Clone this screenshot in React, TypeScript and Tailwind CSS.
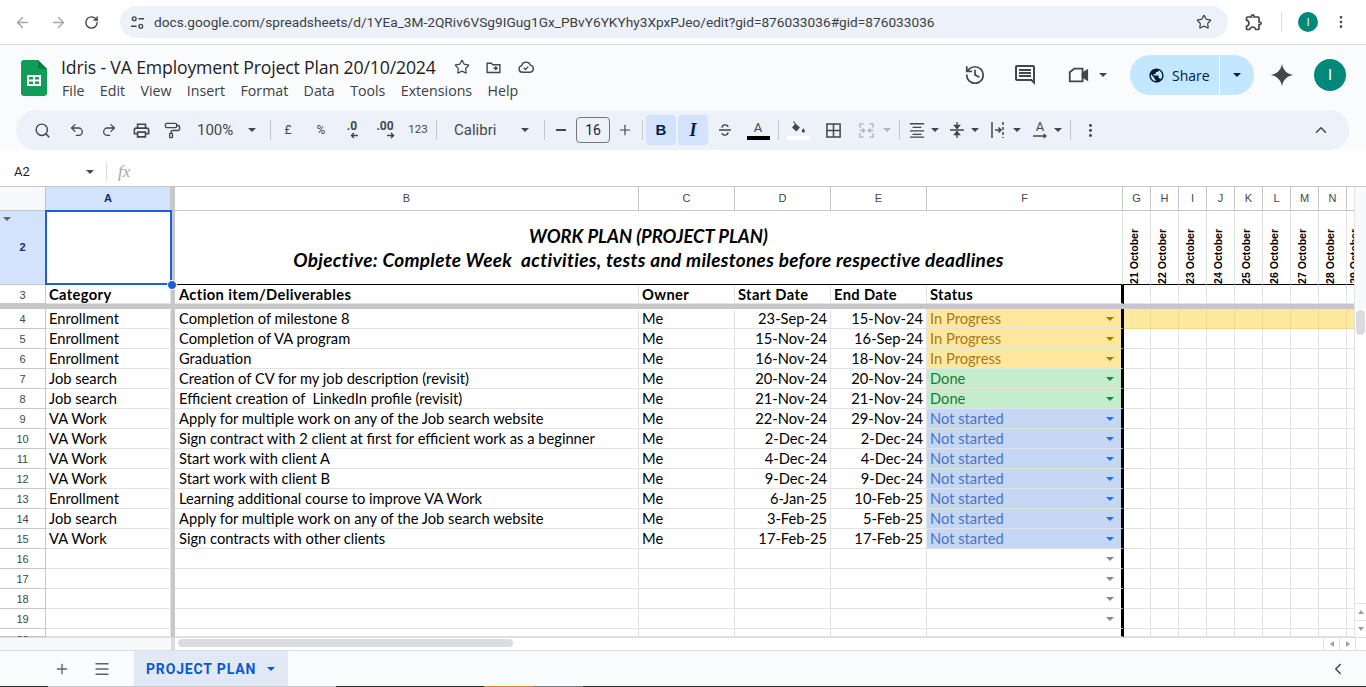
import { ReactNode } from "react";
import {
  ArrowLeft,
  ArrowRight,
  ChevronLeft,
  ChevronUp,
  History,
  Menu,
  MoreVertical,
  PaintRoller,
  Plus,
  RotateCw,
  Search,
  Star,
  Undo2,
  Redo2,
} from "lucide-react";

type Status = "progress" | "done" | "todo";

const plan: [number, string, string, string, string, Status][] = [
  [4, "Enrollment", "Completion of milestone 8", "23-Sep-24", "15-Nov-24", "progress"],
  [5, "Enrollment", "Completion of VA program", "15-Nov-24", "16-Sep-24", "progress"],
  [6, "Enrollment", "Graduation", "16-Nov-24", "18-Nov-24", "progress"],
  [7, "Job search", "Creation of CV for my job description (revisit)", "20-Nov-24", "20-Nov-24", "done"],
  [8, "Job search", "Efficient creation of  LinkedIn profile (revisit)", "21-Nov-24", "21-Nov-24", "done"],
  [9, "VA Work", "Apply for multiple work on any of the Job search website", "22-Nov-24", "29-Nov-24", "todo"],
  [10, "VA Work", "Sign contract with 2 client at first for efficient work as a beginner", "2-Dec-24", "2-Dec-24", "todo"],
  [11, "VA Work", "Start work with client A", "4-Dec-24", "4-Dec-24", "todo"],
  [12, "VA Work", "Start work with client B", "9-Dec-24", "9-Dec-24", "todo"],
  [13, "Enrollment", "Learning additional course to improve VA Work", "6-Jan-25", "10-Feb-25", "todo"],
  [14, "Job search", "Apply for multiple work on any of the Job search website", "3-Feb-25", "5-Feb-25", "todo"],
  [15, "VA Work", "Sign contracts with other clients", "17-Feb-25", "17-Feb-25", "todo"],
];

const statusStyle = {
  progress: { label: "In Progress", box: "bg-[#ffe89d] text-[#a9791c]", arrow: "border-t-[#a67c00]" },
  done: { label: "Done", box: "bg-[#c4eecb] text-[#1f7a35]", arrow: "border-t-[#22863a]" },
  todo: { label: "Not started", box: "bg-[#c6d7f6] text-[#4a74c4]", arrow: "border-t-[#1a73e8]" },
};

const dayColumns = ["G", "H", "I", "J", "K", "L", "M", "N"];
const cellText = "font-['Lato',sans-serif] text-[14.7px] leading-[19px] text-black";
const lineColor = "border-[#e2e3e3]";

function Ic({ d, size = 18, fill = "#444746" }: { d: string; size?: number; fill?: string }) {
  return (
    <svg width={size} height={size} viewBox="0 0 24 24" fill={fill}>
      <path d={d} />
    </svg>
  );
}

function Caret({ color = "border-t-[#444746]" }: { color?: string }) {
  return <span className={`block w-0 h-0 border-x-[4px] border-x-transparent border-t-[4px] ${color}`} />;
}

function Slot({ w, children }: { w: string; children?: ReactNode }) {
  return <div className={`${w} h-full shrink-0 flex items-center justify-center`}>{children}</div>;
}

function Sep() {
  return <div className="w-px h-5 bg-[#c7c7c7] shrink-0" />;
}

function TinyLabel({ children, bold }: { children: ReactNode; bold?: boolean }) {
  return (
    <span className={`font-['Roboto',sans-serif] text-[12px] text-[#444746] ${bold ? "font-bold" : ""}`}>
      {children}
    </span>
  );
}

function DecimalIcon({ label, dir }: { label: string; dir: "left" | "right" }) {
  return (
    <div className="flex flex-col items-end -mt-[2px]">
      <span className="font-['Roboto',sans-serif] font-bold text-[12px] leading-[12px] text-[#444746]">{label}</span>
      <svg width="8" height="7" viewBox="0 0 8 7" fill="none" stroke="#444746" strokeWidth="1.500" className="-mr-[1px]">
        {dir === "left" ? <path d="M8 3.500H1.500M4 1L1.500 3.500 4 6" /> : <path d="M0 3.500h6.500M4 1l2.500 2.500L4 6" />}
      </svg>
    </div>
  );
}

function SheetsLogo() {
  return (
    <svg width="26" height="36" viewBox="0 0 26 36">
      <path d="M3 0h14l9 9v24a3 3 0 0 1-3 3H3a3 3 0 0 1-3-3V3a3 3 0 0 1 3-3z" fill="#0f9d58" />
      <path d="M17 0l9 9h-7a2 2 0 0 1-2-2z" fill="#0b7a43" />
      <path d="M6 15h14v11H6zm2 2v2.500h4V17zm6 0v2.500h4V17zm-6 4.500V24h4v-2.500zm6 0V24h4v-2.500z" fill="#fff" fillRule="evenodd" />
    </svg>
  );
}

function BrowserBar() {
  return (
    <div className="h-[45px] shrink-0 bg-white border-b border-[#dadce0] flex items-center text-[#5f6368]">
      <Slot w="w-[44px]"><ArrowLeft size={17} className="text-[#a3a6aa] ml-[1px]" /></Slot>
      <Slot w="w-[28px]"><ArrowRight size={17} className="text-[#a3a6aa]" /></Slot>
      <Slot w="w-[38px]"><RotateCw size={15} strokeWidth={2.2} className="text-[#444746]" /></Slot>
      <div className="w-[10px]" />
      <div className="w-[1108px] h-[32px] rounded-full bg-[#edf2fa] flex items-center shrink-0">
        <div className="w-[34px] flex justify-center">
          <svg width="15" height="15" viewBox="0 0 16 16" fill="none" stroke="#444746" strokeWidth="1.500">
            <circle cx="4.500" cy="4" r="2" />
            <path d="M9 4h6M1 12h6" />
            <circle cx="11.500" cy="12" r="2" />
          </svg>
        </div>
        <span className="font-['Roboto',sans-serif] text-[13.7px] text-[#3c4043] whitespace-nowrap">
          docs.google.com/spreadsheets/d/1YEa_3M-2QRiv6VSg9IGug1Gx_PBvY6YKYhy3XpxPJeo/edit?gid=876033036#gid=876033036
        </span>
        <div className="flex-1" />
        <Star size={16} strokeWidth={1.8} className="text-[#444746] mr-[16px]" />
      </div>
      <Slot w="w-[52px]">
        <Ic size={20} d="M10.500 4.500c.28 0 .5.22.5.5v2h6v6h2c.28 0 .5.22.5.5s-.22.5-.5.5h-2v6h-2.120c-.68-1.750-2.390-3-4.380-3s-3.700 1.250-4.380 3H4v-2.120c1.750-.68 3-2.390 3-4.380 0-1.990-1.240-3.700-2.990-4.380L4 7h6V5c0-.28.22-.5.5-.5m0-2C9.120 2.500 8 3.620 8 5H4c-1.100 0-1.990.9-1.990 2v3.800h.29c1.490 0 2.700 1.210 2.700 2.700s-1.210 2.700-2.700 2.700H2V20c0 1.100.9 2 2 2h3.800v-.3c0-1.490 1.210-2.700 2.700-2.700s2.700 1.210 2.700 2.700v.3H17c1.100 0 2-.9 2-2v-4c1.380 0 2.500-1.120 2.500-2.500S20.380 11 19 11V7c0-1.100-.9-2-2-2h-4c0-1.380-1.120-2.500-2.500-2.500z" />
      </Slot>
      <div className="w-px h-5 bg-[#d3e3fd] ml-[1px]" />
      <div className="w-[16px]" />
      <div className="w-5 h-5 rounded-full bg-[#00897b] text-white text-[10px] font-['Roboto',sans-serif] flex items-center justify-center">I</div>
      <Slot w="w-[46px]"><MoreVertical size={16} className="text-[#444746]" /></Slot>
    </div>
  );
}

function TitleRow() {
  return (
    <div className="h-[65px] flex items-start shrink-0">
      <div className="w-[61px] pl-[21px] pt-[15px] shrink-0"><SheetsLogo /></div>
      <div className="flex flex-col w-[560px] shrink-0">
        <div className="flex items-center h-[24px] mt-[10px]">
          <span className="font-['Open_Sans',sans-serif] text-[17.7px] leading-[24px] text-[#1f1f1f] whitespace-nowrap tracking-[-0.01em]">
            Idris - VA Employment Project Plan 20/10/2024
          </span>
          <div className="w-[18px]" />
          <Star size={16} strokeWidth={1.8} className="text-[#444746]" />
          <div className="w-[15px]" />
          <svg width="17" height="17" viewBox="0 0 24 24" fill="none" stroke="#444746" strokeWidth="2">
            <path d="M3 6h6l2 2h10v11H3zM12 13h5M14.500 10.500l2.500 2.500-2.500 2.500" />
          </svg>
          <div className="w-[15px]" />
          <svg width="18" height="18" viewBox="0 0 24 24" fill="none" stroke="#444746" strokeWidth="1.800">
            <path d="M7 19a4.500 4.500 0 0 1-.7-8.900A6 6 0 0 1 17.800 9.500 4.800 4.800 0 0 1 17.500 19zM9 13l2.300 2.300L15 11.500" />
          </svg>
        </div>
        <div className="flex items-center gap-[15.4px] h-[22px] mt-[1px] pl-[1px] font-['Open_Sans',sans-serif] text-[14.2px] text-[#3c4043]">
          {["File", "Edit", "View", "Insert", "Format", "Data", "Tools", "Extensions", "Help"].map((m) => (
            <span key={m}>{m}</span>
          ))}
        </div>
      </div>
      <div className="flex-1" />
      <div className="flex items-center h-[40px] mt-[10px] shrink-0">
        <History size={22} strokeWidth={1.900} className="text-[#444746]" />
        <div className="w-[27px]" />
        <Ic size={24} d="M21.990 4c0-1.100-.89-2-1.990-2H4c-1.100 0-2 .9-2 2v12c0 1.100.9 2 2 2h14l4 4-.01-18zM20 4v13.170L18.830 16H4V4h16zM6 12h12v2H6zm0-3h12v2H6zm0-3h12v2H6z" />
        <div className="w-[30px]" />
        <svg width="22" height="22" viewBox="0 0 24 24" fill="none" stroke="#444746" strokeWidth="2">
          <path d="M8 5h9v14H3V9z" />
          <path d="M17 10l5-3v10l-5-3z" fill="#444746" />
        </svg>
        <div className="w-[10px]" />
        <Caret />
        <div className="w-[23px]" />
        <div className="w-[124px] h-[40px] rounded-full bg-[#c2e7ff] flex items-center shrink-0">
          <div className="w-[90px] h-full flex items-center pl-[18px] border-r border-white">
            <Ic size={17} fill="#001d35" d="M12 2C6.480 2 2 6.480 2 12s4.480 10 10 10 10-4.480 10-10S17.520 2 12 2zM4 12c0-.61.08-1.210.21-1.780L8.990 15v1c0 1.100.9 2 2 2v1.930C7.060 19.430 4 16.070 4 12zm13.890 5.400c-.26-.81-1-1.400-1.900-1.400h-1v-3c0-.55-.45-1-1-1h-6v-2h2c.55 0 1-.45 1-1V7h2c1.100 0 2-.9 2-2v-.41C17.920 5.770 20 8.650 20 12c0 2.080-.81 3.980-2.110 5.400z" />
            <span className="ml-[7px] font-['Open_Sans',sans-serif] text-[14px] font-medium text-[#001d35]">Share</span>
          </div>
          <div className="flex-1 flex justify-center"><Caret color="border-t-[#001d35]" /></div>
        </div>
        <div className="w-[15px]" />
        <svg width="26" height="26" viewBox="0 0 24 24" fill="#444746">
          <path d="M12 1.500c.9 5.800 4.700 9.600 10.500 10.500-5.800.9-9.600 4.700-10.500 10.500C11.100 16.700 7.300 12.900 1.500 12 7.300 11.100 11.100 7.300 12 1.500z" />
        </svg>
        <div className="w-[19px]" />
        <div className="w-[32px] h-[32px] rounded-full bg-[#00897b] text-white text-[15px] font-['Roboto',sans-serif] flex items-center justify-center">I</div>
        <div className="w-[20px]" />
      </div>
    </div>
  );
}

function Toolbar() {
  return (
    <div className="h-[40px] ml-[16px] w-[1333px] rounded-full bg-[#edf2fa] flex items-center pl-[10px] shrink-0">
      <Slot w="w-[32px]"><Search size={17} strokeWidth={2} className="text-[#444746]" /></Slot>
      <Slot w="w-[38px]"><Undo2 size={16} strokeWidth={1.900} className="text-[#444746]" /></Slot>
      <Slot w="w-[26px]"><Redo2 size={16} strokeWidth={1.900} className="text-[#444746]" /></Slot>
      <Slot w="w-[38px]">
        <Ic size={19} d="M19 8h-1V3H6v5H5c-1.660 0-3 1.340-3 3v6h4v4h12v-4h4v-6c0-1.660-1.340-3-3-3zM8 5h8v3H8V5zm8 12v2H8v-4h8v2zm2-2v-2H6v2H4v-4c0-.55.45-1 1-1h14c.55 0 1 .45 1 1v4h-2z" />
      </Slot>
      <Slot w="w-[24px]"><PaintRoller size={17} strokeWidth={1.900} className="text-[#444746]" /></Slot>
      <div className="w-[60px] pl-[13px] shrink-0 font-['Roboto',sans-serif] text-[15px] text-[#444746]">100%</div>
      <Slot w="w-[16px]"><Caret /></Slot>
      <div className="w-[10px] shrink-0" />
      <Sep />
      <Slot w="w-[34px]"><TinyLabel>£</TinyLabel></Slot>
      <Slot w="w-[32px]"><TinyLabel>%</TinyLabel></Slot>
      <Slot w="w-[30px]"><DecimalIcon label=".0" dir="left" /></Slot>
      <Slot w="w-[36px]"><DecimalIcon label=".00" dir="right" /></Slot>
      <Slot w="w-[30px]"><span className="font-['Roboto',sans-serif] text-[11.5px] text-[#444746]">123</span></Slot>
      <div className="w-[3px] shrink-0" />
      <Sep />
      <div className="w-[80px] pl-[17px] shrink-0 font-['Roboto',sans-serif] text-[15px] text-[#444746]">Calibri</div>
      <Slot w="w-[16px]"><Caret /></Slot>
      <div className="w-[11px] shrink-0" />
      <Sep />
      <Slot w="w-[31px]"><div className="w-[10px] h-[1.500px] bg-[#444746]" /></Slot>
      <div className="w-[34px] h-[26px] shrink-0 rounded-[4px] border border-[#747775] flex items-center justify-center font-['Roboto',sans-serif] text-[14px] text-[#1f1f1f]">16</div>
      <Slot w="w-[30px]"><Plus size={16} strokeWidth={1.800} className="text-[#444746]" /></Slot>
      <div className="w-[2px] shrink-0" />
      <Sep />
      <div className="w-[3px] shrink-0" />
      <div className="w-[30px] h-[30px] shrink-0 rounded-[4px] bg-[#d3e3fd] flex items-center justify-center font-['Liberation_Sans',sans-serif] font-bold text-[15px] text-[#041e49]">B</div>
      <div className="w-[2px] shrink-0" />
      <div className="w-[30px] h-[30px] shrink-0 rounded-[4px] bg-[#d3e3fd] flex items-center justify-center font-['Liberation_Serif',serif] font-bold italic text-[18px] text-[#041e49]">I</div>
      <Slot w="w-[34px]">
        <svg width="18" height="18" viewBox="0 0 24 24" fill="none" stroke="#444746" strokeWidth="1.800">
          <path d="M4 12h16M8 9c0-5 8-5 8-1M16 15c0 5-8 5-8 1" />
        </svg>
      </Slot>
      <Slot w="w-[32px]">
        <div className="flex flex-col items-center w-[23px]">
          <span className="font-['Roboto',sans-serif] text-[13px] leading-[14px] text-[#444746]">A</span>
          <div className="w-[23px] h-[4px] bg-black mt-[1px]" />
        </div>
      </Slot>
      <div className="w-[4px] shrink-0" />
      <Sep />
      <Slot w="w-[38px]">
        <div className="flex flex-col items-center w-[23px]">
          <svg width="16" height="15" viewBox="0 0 24 22" fill="#444746">
            <path d="M6 1l1.800 3.500L15 11l-5.500 6L3 11l4-4.500L5 2.500zM20 12c1.300 1.800 2.300 3 2.300 4.300a2.300 2.300 0 0 1-4.600 0c0-1.300 1-2.500 2.300-4.300z" />
          </svg>
          <div className="w-[23px] h-[4px] bg-white mt-[1px]" />
        </div>
      </Slot>
      <Slot w="w-[32px]">
        <svg width="17" height="17" viewBox="0 0 18 18" fill="none" stroke="#444746" strokeWidth="1.600">
          <path d="M2 2h14v14H2zM9 2v14M2 9h14" />
        </svg>
      </Slot>
      <Slot w="w-[34px]">
        <svg width="17" height="17" viewBox="0 0 18 18" fill="none" stroke="#b4b6b8" strokeWidth="1.500">
          <path d="M2 6V2h4M12 2h4v4M2 12v4h4M12 16h4v-4M2 9h5M5 7l2 2-2 2M16 9h-5M13 7l-2 2 2 2" />
        </svg>
      </Slot>
      <Slot w="w-[8px]"><Caret color="border-t-[#b4b6b8]" /></Slot>
      <div className="w-[8px] shrink-0" />
      <Sep />
      <div className="w-[31px] h-full shrink-0 pl-[3px] flex items-center justify-center">
        <svg width="16" height="16" viewBox="0 0 18 18" stroke="#444746" strokeWidth="1.500">
          <path d="M1 2h16M4 6h10M1 10h16M4 14h10M1 17h16" />
        </svg>
      </div>
      <Slot w="w-[8px]"><Caret /></Slot>
      <div className="w-[32px] h-full shrink-0 pl-[4px] flex items-center justify-center">
        <svg width="16" height="18" viewBox="0 0 16 18" fill="#444746" stroke="#444746" strokeWidth="1.300">
          <path d="M1 9h14M8 1v5M8 17v-5" />
          <path d="M5.500 4.500h5L8 7.500zM5.500 13.500h5L8 10.500z" />
        </svg>
      </div>
      <Slot w="w-[8px]"><Caret /></Slot>
      <div className="w-[34px] h-full shrink-0 pl-[4px] flex items-center justify-center">
        <svg width="16" height="18" viewBox="0 0 16 18" fill="none" stroke="#444746" strokeWidth="1.500">
          <path d="M2 1v16M5 9h6M8.500 6.500L11 9l-2.500 2.500" />
          <path d="M13 1v16" strokeDasharray="3 2" />
        </svg>
      </div>
      <Slot w="w-[8px]"><Caret /></Slot>
      <div className="w-[33px] h-full shrink-0 pl-[5px] flex items-center justify-center">
        <div className="flex flex-col items-center">
          <span className="font-['Roboto',sans-serif] text-[13px] leading-[12px] text-[#444746]">A</span>
          <svg width="16" height="6" viewBox="0 0 16 6" fill="none" stroke="#444746" strokeWidth="1.300">
            <path d="M1 3h13M11.500 1L14 3l-2.500 2" />
          </svg>
        </div>
      </div>
      <Slot w="w-[8px]"><Caret /></Slot>
      <div className="w-[8px] shrink-0" />
      <Sep />
      <Slot w="w-[38px]"><MoreVertical size={17} strokeWidth={2.200} className="text-[#444746]" /></Slot>
      <div className="flex-1" />
      <Slot w="w-[32px]"><ChevronUp size={18} strokeWidth={2} className="text-[#444746]" /></Slot>
      <div className="w-[12px] shrink-0" />
    </div>
  );
}

function FormulaBar() {
  return (
    <div className="h-[27px] mt-[10px] pb-[2px] shrink-0 bg-white border-b border-[#c7c7c7] flex items-center">
      <span className="w-[86px] pl-[14px] font-['Roboto',sans-serif] text-[13px] text-[#1f1f1f]">A2</span>
      <Caret />
      <div className="w-[12px]" />
      <div className="w-px h-5 bg-[#dadce0]" />
      <span className="ml-[11px] font-['Liberation_Serif',serif] italic text-[17px] leading-[20px] text-[#a6a8aa]">fx</span>
    </div>
  );
}

function RowNumber({ n, clipped }: { n: number; clipped?: boolean }) {
  return (
    <div
      className={`w-[46px] shrink-0 border-r border-b border-[#c7c7c7] flex justify-center bg-white font-['Liberation_Sans',sans-serif] text-[11px] leading-[14px] text-[#444746] ${
        clipped ? "items-start pt-[4px]" : "items-center pt-[1px]"
      }`}
    >
      {n}
    </div>
  );
}

function Freeze() {
  return <div className="w-[4px] shrink-0 bg-[#c7c7c7]" />;
}

function DayCells({ shade }: { shade?: boolean }) {
  return (
    <>
      {dayColumns.map((c, i) => (
        <div
          key={c}
          className={`${i === 0 ? "w-[27px]" : "w-[28px]"} shrink-0 border-r border-b ${
            shade ? "bg-[#ffe9a0] border-[#f1d98a]" : lineColor
          }`}
        />
      ))}
      <div className={`w-[8px] shrink-0 border-b ${shade ? "bg-[#ffe9a0] border-[#f1d98a]" : lineColor}`} />
    </>
  );
}

function PlainCell({ w, children, right, wide }: { w: string; children?: ReactNode; right?: boolean; wide?: boolean }) {
  return (
    <div
      className={`${w} shrink-0 border-r border-b ${lineColor} ${wide ? "pl-[4px]" : "pl-[3px]"} pr-[3px] ${cellText} whitespace-pre overflow-hidden ${
        right ? "text-right" : ""
      }`}
    >
      {children}
    </div>
  );
}

function HeadLabel({ children }: { children: ReactNode }) {
  return <b className="tracking-[0.025em]">{children}</b>;
}

function StatusCell({ status, hideArrow }: { status?: Status; hideArrow?: boolean }) {
  const s = status ? statusStyle[status] : null;
  return (
    <div className={`w-[197px] shrink-0 border-r-[3px] border-r-black border-b ${lineColor} flex items-center pl-[3px] pr-[7px] ${s ? s.box : ""}`}>
      <span className="flex-1 font-['Lato',sans-serif] text-[14.7px] leading-[19px]">{s?.label}</span>
      {!hideArrow && <Caret color={s ? s.arrow : "border-t-[#8a8a8a]"} />}
    </div>
  );
}

function PlanRow({ row }: { row: (typeof plan)[number] }) {
  const [n, category, action, start, end, status] = row;
  return (
    <div className="flex h-[20px] shrink-0">
      <RowNumber n={n} />
      <PlainCell w="w-[125px]">{category}</PlainCell>
      <Freeze />
      <PlainCell w="w-[464px]" wide>{action}</PlainCell>
      <PlainCell w="w-[96px]">Me</PlainCell>
      <PlainCell w="w-[96px]" right>{start}</PlainCell>
      <PlainCell w="w-[96px]" right>{end}</PlainCell>
      <StatusCell status={status} />
      <DayCells shade={n === 4} />
    </div>
  );
}

function EmptyRow({ n, clipped }: { n: number; clipped?: boolean }) {
  return (
    <div className={`flex shrink-0 ${clipped ? "h-[8px] overflow-hidden" : "h-[20px]"}`}>
      <RowNumber n={n} clipped={clipped} />
      <PlainCell w="w-[125px]" />
      <Freeze />
      <PlainCell w="w-[464px]" />
      <PlainCell w="w-[96px]" />
      <PlainCell w="w-[96px]" />
      <PlainCell w="w-[96px]" />
      <StatusCell hideArrow={clipped} />
      <DayCells />
    </div>
  );
}

function ColumnHead({ w, label, active }: { w: string; label: string; active?: boolean }) {
  return (
    <div
      className={`${w} shrink-0 border-r border-[#c7c7c7] flex items-center justify-center font-['Liberation_Sans',sans-serif] text-[11px] ${
        active ? "bg-[#d3e3fd] font-bold text-[#0b2f66]" : "text-[#444746]"
      }`}
    >
      {label}
    </div>
  );
}

function Sheet() {
  return (
    <div className="w-[1354px] h-[450px] overflow-hidden shrink-0">
      <div className="flex h-[24px] border-b border-[#c7c7c7] bg-white">
        <div className="w-[46px] shrink-0 bg-[#f8f9fa] border-r border-[#c7c7c7]" />
        <ColumnHead w="w-[125px]" label="A" active />
        <Freeze />
        <ColumnHead w="w-[464px]" label="B" />
        <ColumnHead w="w-[96px]" label="C" />
        <ColumnHead w="w-[96px]" label="D" />
        <ColumnHead w="w-[96px]" label="E" />
        <ColumnHead w="w-[196px]" label="F" />
        {dayColumns.map((c) => (
          <ColumnHead key={c} w="w-[28px]" label={c} />
        ))}
      </div>

      <div className="flex h-[74px]">
        <div className="w-[46px] shrink-0 relative bg-[#d3e3fd] border-r border-b border-[#c7c7c7] flex items-center justify-center font-['Liberation_Sans',sans-serif] text-[11px] font-bold text-[#0b2f66]">
          2
          <span className="absolute top-[6px] left-[3px] w-0 h-0 border-x-[4px] border-x-transparent border-t-[4px] border-t-[#5f6368]" />
        </div>
        <div className="w-[125px] shrink-0 relative">
          <div className="absolute -left-px -top-px -right-[1px] bottom-0 border-2 border-[#1a62d4]" />
          <div className="absolute -right-[6px] -bottom-[5px] w-[10px] h-[10px] rounded-full bg-[#1a62d4] border border-white z-10" />
        </div>
        <Freeze />
        <div className="w-[948px] shrink-0 border-b border-b-black border-r border-r-[#e2e3e3] flex flex-col items-center pt-[13px] font-['Lato',sans-serif] font-bold italic text-black leading-[24px] whitespace-pre">
          <span className="text-[18.4px]">WORK PLAN (PROJECT PLAN)</span>
          <span className="text-[19px] tracking-[0.3px]">Objective: Complete Week  activities, tests and milestones before respective deadlines</span>
        </div>
        {[21, 22, 23, 24, 25, 26, 27, 28].map((d) => (
          <div key={d} className="w-[28px] shrink-0 border-r border-r-[#e2e3e3] border-b border-b-black overflow-hidden flex items-end justify-center pr-[6px]">
            <span className="[writing-mode:vertical-rl] rotate-180 font-['Liberation_Sans',sans-serif] font-bold text-[10.5px] leading-[12px] text-black whitespace-nowrap">
              {d} October
            </span>
          </div>
        ))}
        <div className="w-[8px] shrink-0 border-b border-b-black overflow-hidden flex items-end justify-start pl-[1px]">
          <span className="[writing-mode:vertical-rl] rotate-180 font-['Liberation_Sans',sans-serif] font-bold text-[10.5px] leading-[12px] text-black whitespace-nowrap">
            29 October
          </span>
        </div>
      </div>

      <div className="flex h-[19px]">
        <RowNumber n={3} />
        <PlainCell w="w-[125px]"><HeadLabel>Category</HeadLabel></PlainCell>
        <Freeze />
        <PlainCell w="w-[464px]" wide><HeadLabel>Action item/Deliverables</HeadLabel></PlainCell>
        <PlainCell w="w-[96px]"><HeadLabel>Owner</HeadLabel></PlainCell>
        <PlainCell w="w-[96px]"><HeadLabel>Start Date</HeadLabel></PlainCell>
        <PlainCell w="w-[96px]"><HeadLabel>End Date</HeadLabel></PlainCell>
        <div className={`w-[197px] shrink-0 border-r-[3px] border-r-black border-b ${lineColor} px-[3px] ${cellText}`}>
          <HeadLabel>Status</HeadLabel>
        </div>
        <DayCells />
      </div>
      <div className="h-[5px] bg-[#c7c7c7]" />

      {plan.map((row) => (
        <PlanRow key={row[0]} row={row} />
      ))}
      {[16, 17, 18, 19].map((n) => (
        <EmptyRow key={n} n={n} />
      ))}
      <EmptyRow n={20} clipped />
    </div>
  );
}

function VerticalScroll() {
  return (
    <div className="w-[12px] h-[450px] shrink-0 flex flex-col border-l border-[#e2e3e3]">
      <div className="h-[122px] bg-[#f8f9fa]" />
      <div className="flex-1 bg-white pt-[1px] px-[1px]">
        <div className="h-[25px] rounded-full bg-[#dadce0]" />
      </div>
      <div className="h-[17px] border-t border-[#e2e3e3] flex items-center justify-center">
        <span className="w-0 h-0 border-x-[3px] border-x-transparent border-b-[4px] border-b-[#9aa0a6]" />
      </div>
      <div className="h-[17px] border-t border-[#e2e3e3] flex items-center justify-center">
        <span className="w-0 h-0 border-x-[3px] border-x-transparent border-t-[4px] border-t-[#9aa0a6]" />
      </div>
    </div>
  );
}

function HorizontalScroll() {
  return (
    <div className="h-[13px] shrink-0 flex border-t border-[#dadce0] bg-white">
      <div className="w-[171px] bg-[#f8f9fa]" />
      <div className="w-[4px] bg-[#dcdcdc]" />
      <div className="w-[3px]" />
      <div className="w-[335px] h-[8px] mt-[1px] rounded-full bg-[#dadce0]" />
      <div className="flex-1" />
      <div className="w-[16px] border-l border-[#e2e3e3] flex items-center justify-center">
        <span className="w-0 h-0 border-y-[3px] border-y-transparent border-r-[4px] border-r-[#9aa0a6]" />
      </div>
      <div className="w-[16px] border-l border-[#e2e3e3] flex items-center justify-center">
        <span className="w-0 h-0 border-y-[3px] border-y-transparent border-l-[4px] border-l-[#9aa0a6]" />
      </div>
      <div className="w-[11px] border-l border-[#e2e3e3]" />
    </div>
  );
}

function TabBar() {
  return (
    <div className="h-[36px] shrink-0 bg-[#f9fbfd] border-t border-[#dadce0] flex items-center">
      <Slot w="w-[40px]" />
      <Slot w="w-[44px]"><Plus size={16} strokeWidth={2} className="text-[#5f6368]" /></Slot>
      <Slot w="w-[36px]"><Menu size={18} strokeWidth={1.800} className="text-[#5f6368]" /></Slot>
      <div className="w-[14px]" />
      <div className="w-[154px] h-full bg-[#e1e9f7] flex items-center pl-[12px] pt-[1px]">
        <span className="font-['Roboto',sans-serif] font-bold text-[14px] tracking-[0.06em] text-[#0b57d0] whitespace-nowrap">PROJECT PLAN</span>
        <span className="ml-[11px] flex"><Caret color="border-t-[#0b57d0]" /></span>
      </div>
      <div className="flex-1" />
      <ChevronLeft size={18} strokeWidth={2} className="text-[#444746] mr-[19px]" />
    </div>
  );
}

function TaskbarEdge() {
  return (
    <div className="h-[1px] shrink-0 flex">
      <div className="w-[48px] bg-[#2b2b22]" />
      <div className="w-[288px] bg-[#c9c9c9]" />
      <div className="w-[148px] bg-[#2b2b22]" />
      <div className="w-[49px] bg-[#c98a3a]" />
      <div className="w-[50px] bg-[#777777]" />
      <div className="flex-1 bg-[#2b2b22]" />
    </div>
  );
}

export default function App() {
  return (
    <div className="w-[1366px] h-[687px] overflow-hidden flex flex-col bg-white">
      <BrowserBar />
      <div className="bg-[#f9fbfd] h-[105px] flex flex-col shrink-0">
        <TitleRow />
        <Toolbar />
      </div>
      <FormulaBar />
      <div className="flex shrink-0">
        <Sheet />
        <VerticalScroll />
      </div>
      <HorizontalScroll />
      <TabBar />
      <TaskbarEdge />
    </div>
  );
}
